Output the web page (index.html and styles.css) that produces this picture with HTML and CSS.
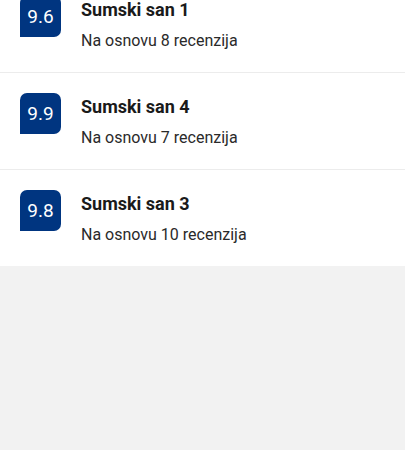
FILE: index.html
```html
<!DOCTYPE html>
<html>
<head>
<meta charset="utf-8">
<link rel="stylesheet" href="styles.css">
</head>
<body>
<div class="list">
  <div class="row">
    <div class="badge">9.6</div>
    <div class="info">
      <div class="title">Sumski san 1</div>
      <div class="sub">Na osnovu 8 recenzija</div>
    </div>
  </div>
  <div class="row">
    <div class="badge">9.9</div>
    <div class="info">
      <div class="title">Sumski san 4</div>
      <div class="sub">Na osnovu 7 recenzija</div>
    </div>
  </div>
  <div class="row last">
    <div class="badge">9.8</div>
    <div class="info">
      <div class="title">Sumski san 3</div>
      <div class="sub">Na osnovu 10 recenzija</div>
    </div>
  </div>
</div>
</body>
</html>
```
FILE: styles.css
```css
html, body {
  margin: 0;
  padding: 0;
  background: #f2f2f2;
  font-family: Roboto, "Liberation Sans", sans-serif;
}
.list {
  margin-top: -24px;
  background: #ffffff;
}
.row {
  display: flex;
  align-items: flex-start;
  gap: 20px;
  height: 97px;
  box-sizing: border-box;
  padding: 20px 20px 0 20px;
  border-bottom: 1px solid #ececec;
}
.row.last {
  height: 96px;
  border-bottom: none;
}
.badge {
  width: 41px;
  height: 41px;
  flex: none;
  background: #003580;
  color: #ffffff;
  border-radius: 7px 7px 7px 0;
  font-size: 19px;
  display: flex;
  align-items: center;
  justify-content: center;
}
.info {
  padding-top: 3px;
  display: flex;
  flex-direction: column;
  gap: 11px;
}
.title {
  font-size: 18px;
  font-weight: 700;
  line-height: 21px;
  color: #1a1a1a;
}
.sub {
  font-size: 16px;
  line-height: 20px;
  color: #2a2a2a;
}
```
